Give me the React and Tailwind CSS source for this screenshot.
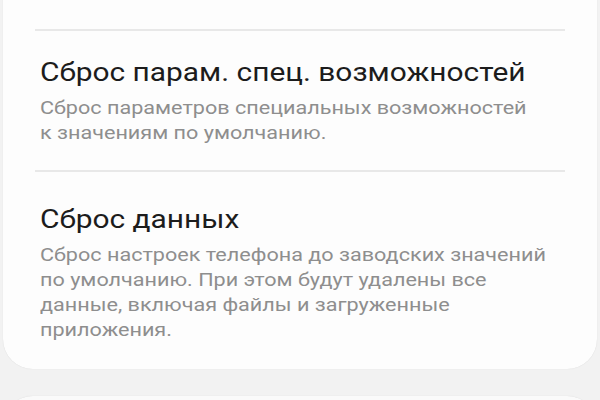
export default function App() {
  return (
    <div
      className="h-[400px] w-[600px] overflow-hidden bg-[#f2f2f2]"
      style={{ fontFamily: 'Roboto, "Noto Sans", sans-serif' }}
    >
      <div className="mx-[3px] -mt-[30px] rounded-b-[30px] bg-[#fdfdfd] pb-[27px] shadow-[0_0_1px_rgba(0,0,0,0.15)]">
        <div className="h-[59px]" />
        <div className="mx-[32px] h-[2px] bg-[#e8e8e8]" />

        <div className="px-[37px] pt-[27px] pb-[25px]">
          <div className="origin-left scale-x-[1.195] text-[25px] leading-[30px] text-[#1c1c1c]">
            Сброс парам. спец. возможностей
          </div>
          <div className="mt-[7px] origin-left scale-x-[1.2] text-[18px] leading-[25px] text-[#8e8e8e]">
            Сброс параметров специальных возможностей
            <br />
            к значениям по умолчанию.
          </div>
        </div>

        <div className="mx-[32px] h-[2px] bg-[#e8e8e8]" />

        <div className="px-[37px] pt-[33px]">
          <div className="origin-left scale-x-[1.195] text-[25px] leading-[30px] text-[#1c1c1c]">
            Сброс данных
          </div>
          <div className="mt-[7px] origin-left scale-x-[1.2] text-[18px] leading-[25px] text-[#8e8e8e]">
            Сброс настроек телефона до заводских значений
            <br />
            по умолчанию. При этом будут удалены все
            <br />
            данные, включая файлы и загруженные
            <br />
            приложения.
          </div>
        </div>
      </div>

      <div className="mx-[3px] mt-[27px] h-[40px] rounded-t-[30px] bg-[#fafafa] shadow-[0_0_1px_rgba(0,0,0,0.15)]" />
    </div>
  );
}
